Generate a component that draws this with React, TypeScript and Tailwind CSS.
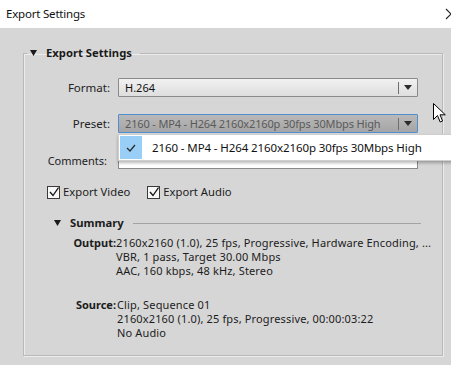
import React from "react";

function DropArrow() {
  return (
    <div className="flex items-center h-full">
      <div className="w-px h-[12px] bg-[#6f6f6f]" />
      <svg width="8" height="5" viewBox="0 0 8 5" className="ml-[5px] mr-[5px]">
        <path d="M0 0 L8 0 L4 5 Z" fill="#2a2a2a" />
      </svg>
    </div>
  );
}

function Check() {
  return (
    <div className="w-[13px] h-[13px] border border-[#3a3a3a] bg-[#f7f7f7] flex items-center justify-center">
      <svg width="10" height="10" viewBox="0 0 10 10">
        <path d="M1 5 L4 8.5 L9.5 0.5" stroke="#111" strokeWidth="1.3" fill="none" />
      </svg>
    </div>
  );
}

export default function App() {
  return (
    <div className="relative w-[451px] h-[365px] overflow-hidden bg-[#d6d6d6] text-[#1c1c1c] text-[11px] leading-[14px] font-['Noto_Sans','Open_Sans',sans-serif]">
      {/* title bar */}
      <div className="h-[28px] bg-white flex items-center pl-[6px] text-[11.5px] tracking-[-0.2px] text-[#111] relative">
        <span>Export Settings</span>
        <svg width="12" height="12" viewBox="0 0 12 12" className="absolute left-[445px] top-[8px]">
          <path d="M1 1 L11 11 M11 1 L1 11" stroke="#222" strokeWidth="1.1" />
        </svg>
      </div>

      <fieldset className="mt-[17px] ml-[23px] w-[420px] h-[311px] border border-[#b9b9b9] shadow-[1px_1px_0_#ececec,inset_1px_1px_0_#ececec]">
        <legend className="ml-[3px] pl-[3px] pr-[8px] h-[16px]">
          <div className="flex items-center h-[16px]">
            <svg width="7" height="6" viewBox="0 0 7 6">
              <path d="M0 0 L7 0 L3.5 6 Z" fill="#1a1a1a" />
            </svg>
            <span className="ml-[9px] font-bold text-[11.25px] text-[#1a1a1a]">Export Settings</span>
          </div>
        </legend>

        <div className="flex flex-col">
          {/* Format */}
          <div className="mt-[17px] grid grid-cols-[86px_300px] gap-x-[8px] items-center">
            <div className="text-right text-[#222] text-[11.5px]">Format:</div>
            <div className="h-[19px] border border-[#8a8a8a] rounded-[1px] bg-gradient-to-b from-[#f1f1f1] to-[#dedede] flex items-center justify-between pl-[6px]">
              <span className="text-[#111]">H.264</span>
              <DropArrow />
            </div>
          </div>
          {/* Preset */}
          <div className="mt-[17px] grid grid-cols-[86px_300px] gap-x-[8px] items-center">
            <div className="text-right text-[#222] text-[11.5px]">Preset:</div>
            <div className="h-[19px] border border-[#4f8fcf] rounded-[1px] bg-gradient-to-b from-[#b9b9b9] to-[#a5a5a5] flex items-center justify-between pl-[6px]">
              <span className="text-[#5a5a5a] whitespace-nowrap tracking-[-0.15px]">2160 - MP4 - H264 2160x2160p 30fps 30Mbps High</span>
              <DropArrow />
            </div>
          </div>
          {/* Comments */}
          <div className="mt-[18px] grid grid-cols-[86px_300px] gap-x-[8px] items-center">
            <div className="text-right text-[#222] text-[11px] pr-[3px] pt-[1px]">Comments:</div>
            <div className="h-[18px] border border-[#8a8a8a] bg-white" />
          </div>
          {/* checkboxes */}
          <div className="mt-[16px] ml-[23px] flex items-center h-[14px] text-[11.25px]">
            <Check />
            <span className="ml-[3px]">Export Video</span>
            <div className="ml-[17px]"><Check /></div>
            <span className="ml-[3px]">Export Audio</span>
          </div>
          {/* Summary */}
          <div className="mt-[16px] ml-[30px] mr-[21px] flex items-center h-[16px]">
            <svg width="7" height="6" viewBox="0 0 7 6">
              <path d="M0 0 L7 0 L3.5 6 Z" fill="#1a1a1a" />
            </svg>
            <span className="ml-[9px] font-bold text-[11.25px]">Summary</span>
            <div className="ml-[9px] flex-1 h-px bg-[#a3a3a3]" />
          </div>
          <div className="mt-[5px] ml-[48px] flex">
            <div className="w-[44px] text-right font-bold">Output:</div>
            <div className="flex flex-col whitespace-nowrap tracking-[0.15px]">
              <span>2160x2160 (1.0), 25 fps, Progressive, Hardware Encoding, ...</span>
              <span>VBR, 1 pass, Target 30.00 Mbps</span>
              <span>AAC, 160 kbps, 48 kHz, Stereo</span>
            </div>
          </div>
          <div className="mt-[20px] ml-[48px] flex">
            <div className="w-[44px] text-right font-bold">Source:</div>
            <div className="flex flex-col whitespace-nowrap tracking-[0.15px]">
              <span className="ml-[1px]">Clip, Sequence 01</span>
              <span className="ml-[1px]">2160x2160 (1.0), 25 fps, Progressive, 00:00:03:22</span>
              <span className="ml-[1px]">No Audio</span>
            </div>
          </div>
        </div>
      </fieldset>

      {/* dropdown popup */}
      <div className="absolute left-[118px] top-[134px] w-[340px] h-[27px] bg-white border border-[#cfcfcf] shadow-[0_2px_3px_rgba(0,0,0,0.28)] flex items-center">
        <div className="ml-[1px] w-[22px] h-[23px] bg-[#99cff7] flex items-center justify-center">
          <svg width="10" height="8" viewBox="0 0 10 8">
            <path d="M1 4 L4 7 L9 1" stroke="#2a2a2a" strokeWidth="1.3" fill="none" />
          </svg>
        </div>
        <span className="ml-[10px] text-[11.5px] tracking-[-0.1px] text-[#111] whitespace-nowrap">2160 - MP4 - H264 2160x2160p 30fps 30Mbps High</span>
      </div>

      {/* mouse cursor */}
      <svg width="13" height="21" viewBox="0 0 13 21" className="absolute left-[433px] top-[103px]">
        <path d="M0.5 0.5 L0.5 16.5 L4.5 12.5 L7.2 19 L9.6 18 L7 11.8 L12.3 11.8 Z" fill="#fff" stroke="#000" strokeWidth="1" strokeLinejoin="round" />
      </svg>
    </div>
  );
}
